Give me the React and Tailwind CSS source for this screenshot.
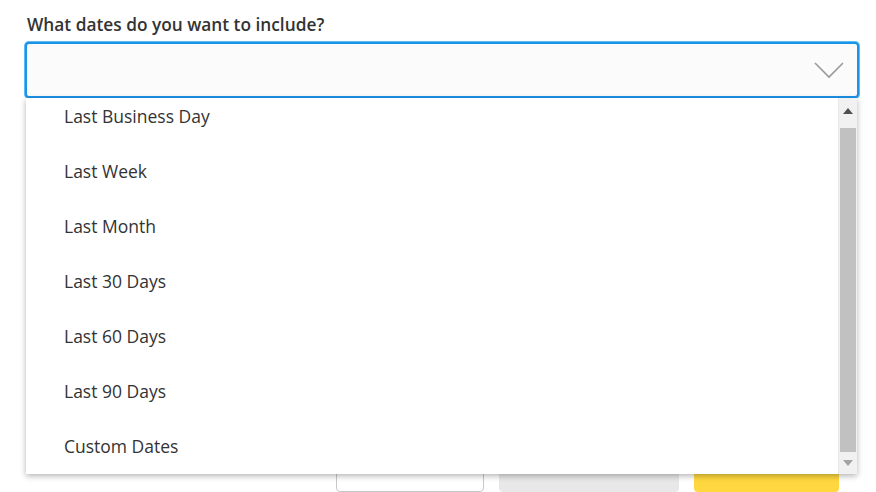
import React from 'react';

const options = [
  'Last Business Day',
  'Last Week',
  'Last Month',
  'Last 30 Days',
  'Last 60 Days',
  'Last 90 Days',
  'Custom Dates',
];

const App = () => {
  return (
    <div className="w-[876px] h-[492px] overflow-hidden bg-white px-[25px] pt-[13px] font-['Open_Sans',sans-serif] text-[#333]">
      <div className="pl-[2px] text-[17.3px] font-semibold leading-[24px]">What dates do you want to include?</div>

      <div className="relative mt-[5px] w-[834px]">
        {/* select box */}
        <div className="h-[56px] rounded-[4px] border-2 border-[#1b93e6] bg-[#fbfbfb] shadow-[0_0_0_1px_#5bbcf7] flex items-center justify-end pr-[13px]">
          <svg width="30" height="18" viewBox="0 0 30 18" fill="none">
            <path d="M1 2 L15 16 L29 2" stroke="#9a9a9a" strokeWidth="1.6" />
          </svg>
        </div>

        {/* dropdown list */}
        <div className="absolute top-[56px] left-[1px] w-[831px] h-[376px] bg-white shadow-[0_2px_6px_rgba(0,0,0,0.3)] flex z-10">
          <div className="flex-1 overflow-hidden">
            <div className="-mt-[9px]">
              {options.map((o) => (
                <div key={o} className="h-[55px] flex items-center pl-[38px] text-[17.5px] text-[#333]">
                  {o}
                </div>
              ))}
            </div>
          </div>
          <div className="w-[19px] bg-[#f1f1f1] flex flex-col items-center border-l border-[#e8e8e8]">
            <div className="h-[30px] flex items-center justify-center pb-[4px]">
              <svg width="10" height="6" viewBox="0 0 10 6"><path d="M0 6 L5 0 L10 6 Z" fill="#505050" /></svg>
            </div>
            <div className="w-[16px] h-[324px] bg-[#c1c1c1]" />
            <div className="flex-1 flex items-center justify-center">
              <svg width="10" height="6" viewBox="0 0 10 6"><path d="M0 0 L5 6 L10 0 Z" fill="#a3a3a3" /></svg>
            </div>
          </div>
        </div>
      </div>

      {/* buttons behind the list */}
      <div className="mt-[354px] flex justify-end pr-[12px] gap-[15px]">
        <div className="w-[148px] h-[40px] rounded-[4px] border border-[#c8c8c8] bg-white" />
        <div className="w-[180px] h-[40px] rounded-[4px] bg-[#e8e8e8]" />
        <div className="w-[145px] h-[40px] rounded-[4px] bg-[#ffd83f]" />
      </div>
    </div>
  );
};

export default App;
